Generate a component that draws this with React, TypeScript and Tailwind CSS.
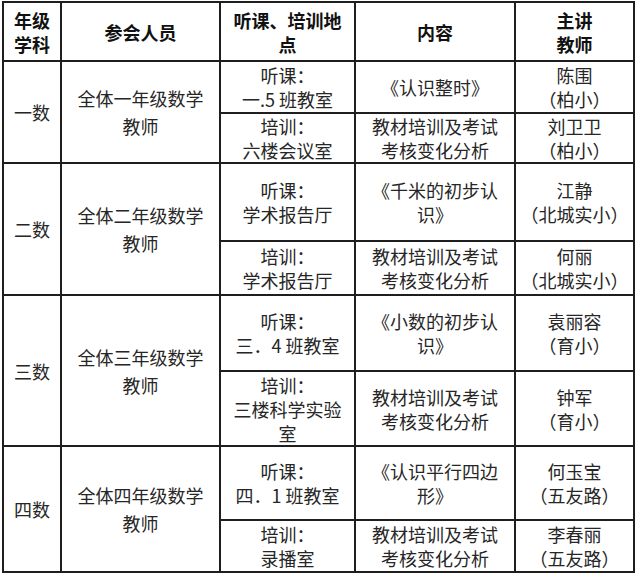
import React from 'react'

type Session = { place: string[]; topic: string[]; teacher: string[] }
type Grade = { label: string; people: string[]; sessions: [Session, Session]; heights: [number, number] }

const grades: Grade[] = [
  {
    label: '一数',
    people: ['全体一年级数学', '教师'],
    heights: [52, 50],
    sessions: [
      { place: ['听课：', '一.5 班教室'], topic: ['《认识整时》'], teacher: ['陈围', '（柏小）'] },
      { place: ['培训：', '六楼会议室'], topic: ['教材培训及考试', '考核变化分析'], teacher: ['刘卫卫', '（柏小）'] },
    ],
  },
  {
    label: '二数',
    people: ['全体二年级数学', '教师'],
    heights: [78, 54],
    sessions: [
      { place: ['听课：', '学术报告厅'], topic: ['《千米的初步认', '识》'], teacher: ['江静', '（北城实小）'] },
      { place: ['培训：', '学术报告厅'], topic: ['教材培训及考试', '考核变化分析'], teacher: ['何丽', '（北城实小）'] },
    ],
  },
  {
    label: '三数',
    people: ['全体三年级数学', '教师'],
    heights: [76, 75],
    sessions: [
      { place: ['听课：', '三．4 班教室'], topic: ['《小数的初步认', '识》'], teacher: ['袁丽容', '（育小）'] },
      { place: ['培训：', '三楼科学实验', '室'], topic: ['教材培训及考试', '考核变化分析'], teacher: ['钟军', '（育小）'] },
    ],
  },
  {
    label: '四数',
    people: ['全体四年级数学', '教师'],
    heights: [74, 52],
    sessions: [
      { place: ['听课：', '四．1 班教室'], topic: ['《认识平行四边', '形》'], teacher: ['何玉宝', '（五友路）'] },
      { place: ['培训：', '录播室'], topic: ['教材培训及考试', '考核变化分析'], teacher: ['李春丽', '（五友路）'] },
    ],
  },
]

const Lines = ({ lines }: { lines: string[] }) => (
  <>
    {lines.map((l, i) => (
      <div key={i} className="whitespace-nowrap">{l}</div>
    ))}
  </>
)

const cell = 'border-2 border-[#1e1e1e] p-0 text-center align-middle'

export default function App() {
  return (
    <div
      className="w-[640px] h-[575px] bg-white pt-px pl-[2px] text-[#262626]"
      style={{ fontFamily: '"Noto Sans CJK SC", "Liberation Sans", sans-serif' }}
    >
      <table className="table-fixed border-collapse w-[633px] text-[18px] leading-[24px]">
        <colgroup>
          <col className="w-[58px]" />
          <col className="w-[159px]" />
          <col className="w-[135px]" />
          <col className="w-[160px]" />
          <col className="w-[119px]" />
        </colgroup>
        <thead>
          <tr className="h-[59px] font-bold text-[#111] leading-[24px]">
            <th className={cell}><Lines lines={['年级', '学科']} /></th>
            <th className={cell}>参会人员</th>
            <th className={cell}><Lines lines={['听课、培训地', '点']} /></th>
            <th className={cell}>内容</th>
            <th className={cell}><Lines lines={['主讲', '教师']} /></th>
          </tr>
        </thead>
        <tbody>
          {grades.map((g) =>
            g.sessions.map((s, i) => (
              <tr key={g.label + i} style={{ height: g.heights[i] }}>
                {i === 0 && (
                  <>
                    <td rowSpan={2} className={cell}>{g.label}</td>
                    <td rowSpan={2} className={cell + ' leading-[28px]'}><Lines lines={g.people} /></td>
                  </>
                )}
                <td className={cell}><Lines lines={s.place} /></td>
                <td className={cell}><Lines lines={s.topic} /></td>
                <td className={cell}><Lines lines={s.teacher} /></td>
              </tr>
            ))
          )}
        </tbody>
      </table>
    </div>
  )
}
